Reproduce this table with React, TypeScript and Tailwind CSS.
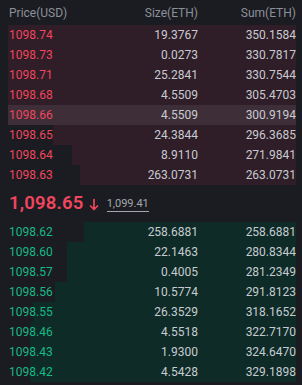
import React from "react";

type Row = { p: string; s: string; t: string; left: number };

const asks: Row[] = [
  { p: "1098.74", s: "19.3767", t: "350.1584", left: 8 },
  { p: "1098.73", s: "0.0273", t: "330.7817", left: 8 },
  { p: "1098.71", s: "25.2841", t: "330.7544", left: 8 },
  { p: "1098.68", s: "4.5509", t: "305.4703", left: 8 },
  { p: "1098.66", s: "4.5509", t: "300.9194", left: 8 },
  { p: "1098.65", s: "24.3844", t: "296.3685", left: 53 },
  { p: "1098.64", s: "8.9110", t: "271.9841", left: 72 },
  { p: "1098.63", s: "263.0731", t: "263.0731", left: 80 },
];

const bids: Row[] = [
  { p: "1098.62", s: "258.6881", t: "258.6881", left: 84 },
  { p: "1098.60", s: "22.1463", t: "280.8344", left: 67 },
  { p: "1098.57", s: "0.4005", t: "281.2349", left: 67 },
  { p: "1098.56", s: "10.5774", t: "291.8123", left: 55 },
  { p: "1098.55", s: "26.3529", t: "318.1652", left: 33 },
  { p: "1098.46", s: "4.5518", t: "322.7170", left: 30 },
  { p: "1098.43", s: "1.9300", t: "324.6470", left: 30 },
  { p: "1098.42", s: "4.5428", t: "329.1898", left: 30 },
];

function OrderRow({ r, side, hover }: { r: Row; side: "ask" | "bid"; hover?: boolean }) {
  const w = 296 - r.left;
  return (
    <div className="relative h-[20px] flex items-center">
      <div
        className={`absolute top-0 bottom-0 right-0 ${side === "ask" ? "bg-[#2f1d27]" : "bg-[#0e2b27]"}`}
        style={{ width: `${w}px` }}
      />
      {hover && <div className="absolute top-0 bottom-0 left-0 right-0 bg-[#3e2e38]" />}
      <div className="relative flex w-full items-center">
        <span className={`w-[80px] pl-px ${side === "ask" ? "text-[#f0465e]" : "text-[#17b985]"}`}>{r.p}</span>
        <span className="flex-1 text-right text-[#c7cbd1]">{r.s}</span>
        <span className="w-[98px] text-right text-[#c7cbd1]">{r.t}</span>
      </div>
    </div>
  );
}

export default function App() {
  return (
    <div
      className="w-[302px] h-[385px] bg-[#1b1c21] overflow-hidden pl-[8px] pr-[6px] text-[12px] leading-none"
      style={{ fontFamily: "Roboto, 'Liberation Sans', sans-serif" }}
    >
      <div className="h-[25px] flex items-center text-[#8b9099]">
        <span className="w-[80px] pl-px">Price(USD)</span>
        <span className="flex-1 text-right">Size(ETH)</span>
        <span className="w-[98px] text-right">Sum(ETH)</span>
      </div>
      <div>
        {asks.map((r, i) => (
          <OrderRow key={r.p} r={r} side="ask" hover={i === 4} />
        ))}
      </div>
      <div className="h-[37px] flex items-center">
        <span className="text-[18.5px] font-semibold text-[#f0465e] pl-px tracking-[0.2px]">1,098.65</span>
        <svg width="10" height="13" viewBox="0 0 10 13" className="ml-[5px] mt-[1px]" fill="none" stroke="#f0465e" strokeWidth="1.7" strokeLinecap="round" strokeLinejoin="round">
          <path d="M5 1.5V11.5M1.5 8L5 11.5L8.5 8" />
        </svg>
        <span className="ml-[8px] text-[11px] text-[#a3a7ae] border-b border-[#a3a7ae] pb-[2px] mt-[2px]">1,099.41</span>
      </div>
      <div>
        {bids.map((r) => (
          <OrderRow key={r.p} r={r} side="bid" />
        ))}
      </div>
    </div>
  );
}
